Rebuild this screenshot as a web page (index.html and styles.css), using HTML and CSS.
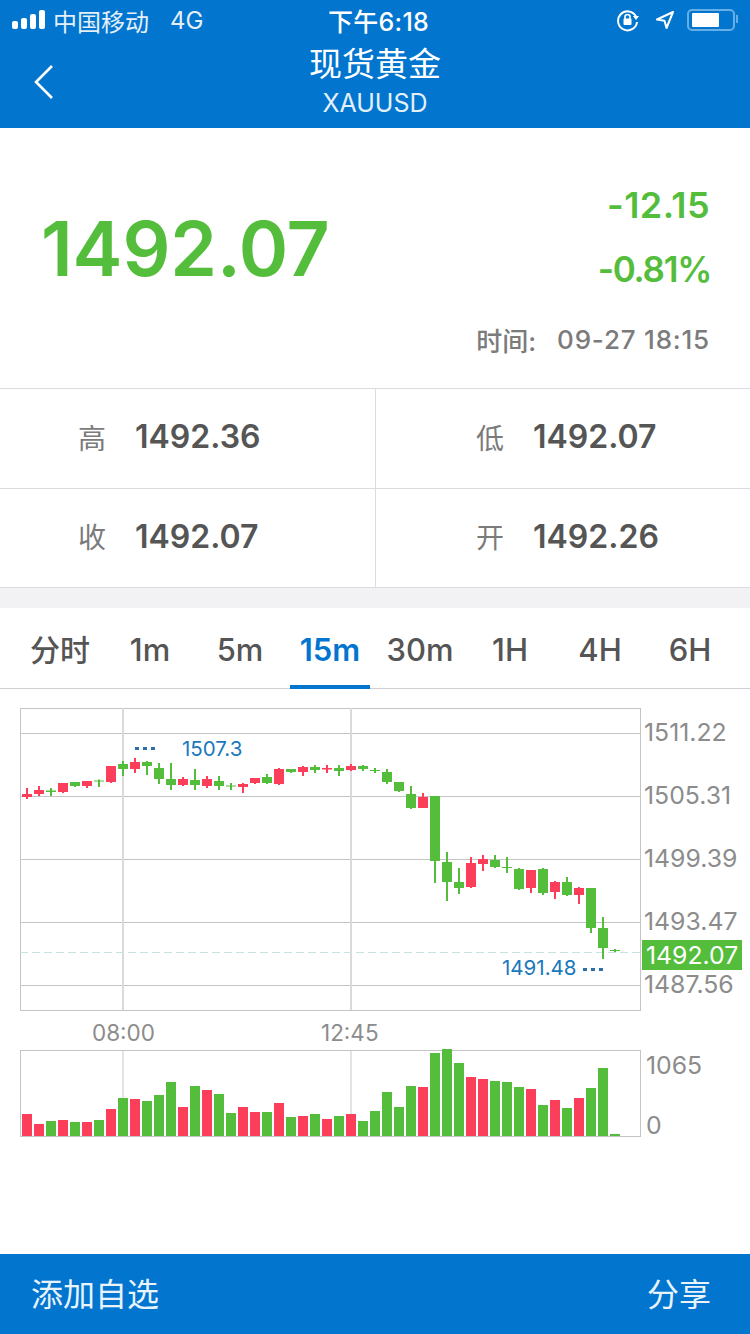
FILE: index.html
```html
<!DOCTYPE html>
<html>
<head>
  <meta charset="utf-8">
  <title>现货黄金</title>
  <link rel="stylesheet" href="styles.css">
</head>
<body>
  <div class="page">
    <header class="header">
      <div class="status-bar">
        <div class="status-left">
          <svg class="signal" width="36" height="20" viewBox="0 0 36 20">
            <rect x="0" y="11" width="6" height="8" rx="2"/>
            <rect x="9" y="8" width="6" height="11" rx="2"/>
            <rect x="18" y="4" width="6" height="15" rx="2"/>
            <rect x="27" y="0" width="6" height="19" rx="2"/>
          </svg>
          <span class="carrier">中国移动</span>
          <span class="network">4G</span>
        </div>
        <div class="status-time">下午6:18</div>
        <div class="status-right">
          <svg width="24" height="24" viewBox="0 0 24 24" fill="none">
            <path d="M20 8.5A9.5 9.5 0 1 0 21 14" stroke="#fff" stroke-width="2"/>
            <path d="M17 8h6l-3 4z" fill="#fff"/>
            <rect x="7.5" y="10.5" width="8" height="6.5" rx="1" fill="#fff"/>
            <path d="M9 11V9a2.5 2.5 0 0 1 5 0v2" stroke="#fff" stroke-width="1.6"/>
          </svg>
          <svg class="location" width="20" height="20" viewBox="0 0 20 20" fill="none">
            <path d="M18 2L2 9.5l7.5 1.200L11.500 18z" stroke="#fff" stroke-width="2" stroke-linejoin="round"/>
          </svg>
          <div class="battery"><div class="battery-level"></div></div>
        </div>
      </div>
      <div class="nav-bar">
        <svg class="back" width="22" height="36" viewBox="0 0 22 36" fill="none">
          <path d="M19 2L3 18l16 16" stroke="#fff" stroke-width="2.600"/>
        </svg>
        <div class="nav-title">现货黄金</div>
        <div class="nav-sub">XAUUSD</div>
      </div>
    </header>

    <section class="quote">
      <div class="quote-price">1492.07</div>
      <div class="quote-side">
        <div class="quote-change">-12.15</div>
        <div class="quote-change quote-percent">-0.81%</div>
        <div class="quote-time"><span>时间:</span><span class="quote-date">09-27 18:15</span></div>
      </div>
    </section>

    <section class="stats">
      <div class="stat"><span class="stat-label">高</span><span class="stat-value">1492.36</span></div>
      <div class="stat"><span class="stat-label">低</span><span class="stat-value">1492.07</span></div>
      <div class="stat"><span class="stat-label">收</span><span class="stat-value">1492.07</span></div>
      <div class="stat"><span class="stat-label">开</span><span class="stat-value">1492.26</span></div>
    </section>

    <div class="divider"></div>

    <nav class="tabs">
      <div class="tab tab-cjk">分时</div>
      <div class="tab">1m</div>
      <div class="tab">5m</div>
      <div class="tab active">15m</div>
      <div class="tab">30m</div>
      <div class="tab">1H</div>
      <div class="tab">4H</div>
      <div class="tab">6H</div>
    </nav>

    <main class="chart">
      <svg id="chart" width="750" height="565" viewBox="0 689 750 565"></svg>
    </main>

    <footer class="footer">
      <span>添加自选</span>
      <span>分享</span>
    </footer>
  </div>
  <script src="chart.js"></script>
</body>
</html>
```

FILE: styles.css
```css
* {
  box-sizing: border-box;
}

body {
  margin: 0;
  background: #fff;
  font-family: Inter, "Noto Sans CJK SC", sans-serif;
}

.page {
  display: flex;
  flex-direction: column;
  height: 1334px;
  overflow: hidden;
}

.header {
  background: #0275cf;
  color: #fff;
  height: 128px;
}

.status-bar {
  display: grid;
  grid-template-columns: 1fr auto 1fr;
  align-items: center;
  height: 40px;
  padding: 0 12px;
}

.status-left {
  display: flex;
  align-items: center;
}

.signal {
  fill: #fff;
  margin-right: 5px;
}

.carrier {
  font-size: 24px;
  color: #e3f0fa;
}

.network {
  font-size: 24px;
  margin-left: 21px;
  color: #e3f0fa;
}

.status-time {
  margin-left: 7px;
  font-size: 25px;
  font-weight: 500;
  letter-spacing: 0.3px;
}

.status-right {
  display: flex;
  align-items: center;
  justify-content: flex-end;
  gap: 15px;
}

.location {
  margin-right: -3px;
}

.battery {
  position: relative;
  width: 48px;
  height: 22px;
  margin-right: 3px;
  padding: 2px 3px;
  border: 2px solid #66aee6;
  border-radius: 5px;
}

.battery::after {
  content: "";
  position: absolute;
  right: -5px;
  top: 4px;
  width: 2px;
  height: 8px;
  background: #66aee6;
}

.battery-level {
  width: 27px;
  height: 14px;
  background: #fff;
  border-radius: 1px;
}

.nav-bar {
  position: relative;
  display: flex;
  flex-direction: column;
  align-items: center;
  height: 88px;
}

.back {
  position: absolute;
  left: 33px;
  top: 24px;
}

.nav-title {
  font-size: 33px;
  line-height: 49px;
}

.nav-sub {
  font-size: 25px;
  line-height: 28px;
  color: #e3f0fa;
}

.quote {
  display: flex;
  align-items: center;
  justify-content: space-between;
  height: 260px;
  padding: 0 40px 0 41px;
}

.quote-price {
  margin-bottom: 20px;
  font-size: 75px;
  font-weight: 600;
  letter-spacing: -0.1px;
  color: #54bd3c;
}

.quote-side {
  display: flex;
  flex-direction: column;
  align-items: flex-end;
  padding-top: 14px;
}

.quote-change {
  font-size: 36px;
  font-weight: 600;
  line-height: 64px;
  letter-spacing: 0.4px;
  color: #54bd3c;
}

.quote-percent {
  margin-right: -1px;
  font-size: 35px;
  letter-spacing: -1.3px;
}

.quote-time {
  display: flex;
  align-items: center;
  margin-top: 20px;
  font-size: 26px;
  font-weight: 500;
  color: #7b7b7b;
}

.quote-date {
  margin-left: 21px;
  font-size: 26px;
  letter-spacing: 0.8px;
}

.stats {
  display: grid;
  grid-template-columns: 376px 374px;
  border-top: 1px solid #dcdce0;
}

.stat {
  display: flex;
  align-items: center;
  gap: 29px;
  height: 100px;
  padding-left: 78px;
  padding-bottom: 4px;
  border-bottom: 1px solid #dcdce0;
}

.stat:nth-child(odd) {
  border-right: 1px solid #dcdce0;
}

.stat:nth-child(even) {
  padding-left: 100px;
}

.stat:nth-child(n+3) {
  height: 99px;
}

.stat-label {
  font-size: 28px;
  color: #7b7b7b;
}

.stat-value {
  font-size: 32px;
  font-weight: 600;
  color: #555;
}

.divider {
  height: 20px;
  background: #f2f2f4;
}

.tabs {
  display: flex;
  height: 81px;
  padding: 0 15px;
  border-bottom: 1px solid #d0d0d4;
}

.tab {
  flex: 1;
  margin: 0 5px -1px;
  padding-top: 6px;
  text-align: center;
  font-size: 31px;
  font-weight: 500;
  line-height: 72px;
  white-space: nowrap;
  color: #555;
}

.tab-cjk {
  font-size: 30px;
}

.tab.active {
  color: #0275cf;
  font-weight: 600;
  border-bottom: 4px solid #0275cf;
}

.chart {
  flex: 1;
}

#chart {
  display: block;
}

#chart text {
  font-family: Inter, sans-serif;
}

.footer {
  display: flex;
  align-items: center;
  justify-content: space-between;
  height: 80px;
  padding: 0 39px 4px 31px;
  background: #0275cf;
  color: #e8f3fb;
  font-size: 32px;
}
```

FILE: chart.js
```js
// [wick top, body top, body bottom, wick bottom, red?]
const candles = [
  [788, 794, 797, 799, 1], [786, 790, 794, 796, 1], [788, 790.5, 792, 796, 0], [783, 783, 792, 793, 1],
  [782, 782, 786, 787, 0], [781, 781, 786, 788, 1], [779.5, 780.5, 781.5, 787, 0], [766, 766, 782, 783, 1],
  [761, 764, 769, 776, 0], [758, 762, 769, 773, 1], [761, 762, 766, 775, 0], [763, 768, 779, 784, 0],
  [763, 779, 785, 790, 0], [777, 779, 785, 786, 1], [769, 780, 785, 790, 0], [776, 779, 786, 788, 1],
  [776, 781, 786, 790, 0], [783, 785.5, 786.5, 790, 0], [783, 784, 787, 793, 1], [778, 778, 783, 784, 1],
  [774, 777, 783, 784, 0], [768, 769, 784, 785, 1], [769, 769, 772, 773, 0], [766, 767, 772, 776, 1],
  [765, 767, 770, 773, 0], [765, 768, 769.5, 773, 1], [765, 768, 771, 776, 0], [764, 766, 770, 771, 1],
  [765, 766, 769, 771, 0], [768, 770, 771, 773, 0], [769, 772, 782, 784, 0], [782, 782, 791, 792, 0],
  [786, 794, 808, 809, 0], [793, 797, 808, 808, 1], [796, 796, 861, 883, 0], [852, 862, 882, 901, 0],
  [868, 882, 888, 894, 0], [857, 863, 887, 888, 1], [855, 859, 864, 871, 1], [855, 860, 867, 868, 0],
  [857, 867, 868, 873, 0], [868, 869, 889, 890, 0], [870, 870, 888, 893, 1], [868, 869, 893, 895, 0],
  [881, 882, 892, 899, 1], [877, 882, 895, 896, 0], [887, 888, 895, 904, 1], [888, 888, 928, 933, 0],
  [917, 928, 948, 959, 0], [949, 950, 951, 952, 0]
];

const volumeTops = [
  1114, 1124, 1121, 1120, 1122, 1122, 1120, 1109, 1098, 1099,
  1101, 1095, 1082, 1107, 1086, 1090, 1094, 1113, 1107, 1112,
  1112, 1103, 1117, 1116, 1114, 1119, 1116, 1114, 1121, 1111,
  1092, 1107, 1086, 1087, 1053, 1049, 1063, 1077, 1079, 1081,
  1082, 1087, 1089, 1105, 1100, 1108, 1098, 1088, 1068, 1134
];

const GREEN = '#54bd3c';
const RED = '#fb3f5a';
const GRID = '#c4c4c4';
const LABEL = '#8c8c8c';
const BLUE = '#1a78bd';

const svg = document.getElementById('chart');
let out = '';

function line(x1, y1, x2, y2, color, width, dash) {
  out += `<line x1="${x1}" y1="${y1}" x2="${x2}" y2="${y2}" stroke="${color}" stroke-width="${width}"` +
    (dash ? ` stroke-dasharray="${dash}"` : '') + '/>';
}

function rect(x, y, w, h, color) {
  out += `<rect x="${x}" y="${y}" width="${w}" height="${h}" fill="${color}"/>`;
}

function text(x, y, str, size, color) {
  out += `<text x="${x}" y="${y}" font-size="${size}" fill="${color}">${str}</text>`;
}

// price panel grid
out += `<rect x="20.5" y="708.5" width="620" height="302" fill="none" stroke="${GRID}"/>`;
[733.5, 796.5, 859.5, 922.5, 985.5].forEach(y => line(20, y, 640, y, GRID, 1));
[123, 351].forEach(x => line(x, 708, x, 1010, '#dadada', 2));
line(20, 952.5, 640, 952.5, '#c5e3e3', 1, '8 4');

// volume panel grid
[123, 351].forEach(x => line(x, 1050, x, 1136, '#dadada', 1.5));
out += `<rect x="20.5" y="1050.5" width="620" height="86" fill="none" stroke="${GRID}"/>`;

candles.forEach((c, i) => {
  const x = 27 + i * 12;
  const color = c[4] ? RED : GREEN;
  line(x, c[0], x, c[3], color, 2);
  rect(x - 5, c[1], 10, Math.max(c[2] - c[1], 1), color);
  rect(x - 5, volumeTops[i], 10, 1136 - volumeTops[i], color);
});

// high and low markers
[135, 143, 151].forEach(x => rect(x, 747, 4, 3, '#2b70a8'));
text(182, 756, '1507.3', 20.5, BLUE);
text(502, 975, '1491.48', 20.5, BLUE);
[583, 591, 599].forEach(x => rect(x, 968, 4, 3, '#2b70a8'));

// price axis
[['1511.22', 741], ['1505.31', 804], ['1499.39', 867], ['1493.47', 930], ['1487.56', 993]]
  .forEach(([t, y]) => text(644, y, t, 24.8, LABEL));
rect(642, 940, 100, 30, GREEN);
text(646, 964, '1492.07', 24.8, '#fff');

// time axis
text(92, 1041, '08:00', 22.5, LABEL);
text(321, 1041, '12:45', 22.5, LABEL);

// volume axis
text(646, 1074, '1065', 24.8, LABEL);
text(646, 1134, '0', 24.8, LABEL);

svg.innerHTML = out;
```
